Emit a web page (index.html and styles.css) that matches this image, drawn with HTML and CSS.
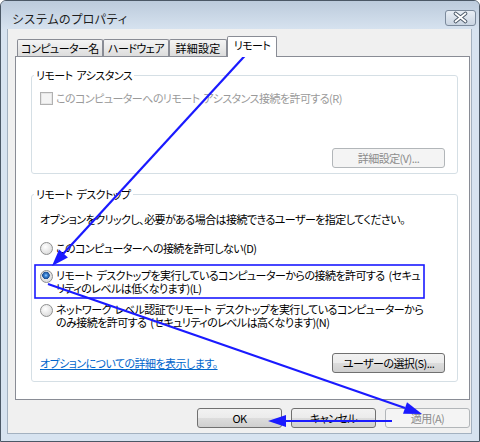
FILE: index.html
```html
<!DOCTYPE html>
<html lang="ja">
<head>
    <meta charset="UTF-8">
    <title>システムのプロパティ</title>
    <link rel="stylesheet" href="styles.css">
</head>
<body>
    <div class="window">
        <div class="titlebar">
            <span class="title">システムのプロパティ</span>
            <span class="close">
                <svg width="29" height="14" viewBox="0 0 29 14">
                    <path d="M9.5 2.5 L19.5 10.5 M19.5 2.5 L9.5 10.5" stroke="#4a5868" stroke-width="3.6" stroke-linecap="round"/>
                    <path d="M9.5 2.5 L19.5 10.5 M19.5 2.5 L9.5 10.5" stroke="#ffffff" stroke-width="1.8" stroke-linecap="round"/>
                </svg>
            </span>
        </div>

        <div class="client">
            <div class="tabs">
                <div class="tab t1">コンピューター名</div>
                <div class="tab t2">ハードウェア</div>
                <div class="tab t3">詳細設定</div>
                <div class="tab active">リモート</div>
            </div>

            <div class="panel">
                <fieldset class="group g1">
                    <legend>リモート アシスタンス</legend>
                    <div class="check off">
                        <span class="box"></span>
                        <span>このコンピューターへのリモート アシスタンス接続を許可する(R)</span>
                    </div>
                    <div class="row">
                        <button class="btn wide off">詳細設定(V)...</button>
                    </div>
                </fieldset>

                <fieldset class="group g2">
                    <legend>リモート デスクトップ</legend>
                    <p class="desc">オプションをクリックし、必要がある場合は接続できるユーザーを指定してください。</p>
                    <div class="radio r1">
                        <span class="dot"></span>
                        <span>このコンピューターへの接続を許可しない(D)</span>
                    </div>
                    <div class="radio r2">
                        <span class="dot on"></span>
                        <span>リモート デスクトップを実行しているコンピューターからの接続を許可する (セキュ<br>リティのレベルは低くなります)(L)</span>
                    </div>
                    <div class="radio r3">
                        <span class="dot"></span>
                        <span>ネットワーク レベル認証でリモート デスクトップを実行しているコンピューターから<br>のみ接続を許可する (セキュリティのレベルは高くなります)(N)</span>
                    </div>
                    <div class="foot">
                        <a class="link" href="#">オプションについての詳細を表示します。</a>
                        <button class="btn wide">ユーザーの選択(S)...</button>
                    </div>
                </fieldset>
            </div>

            <div class="actions">
                <button class="btn">OK</button>
                <button class="btn">キャンセル</button>
                <button class="btn off">適用(A)</button>
            </div>
        </div>

        <svg class="marks" width="480" height="442" viewBox="0 0 480 442">
            <rect x="35" y="265" width="389" height="33" fill="none" stroke="#1a1aff" stroke-width="1.6"/>
            <line x1="252" y1="48" x2="63" y2="254" stroke="#1a1aff" stroke-width="2.2"/>
            <polygon points="52,266 67.9,257.5 59.1,249.5" fill="#1a1aff"/>
            <line x1="48" y1="284" x2="405" y2="408" stroke="#1a1aff" stroke-width="2.2"/>
            <polygon points="422,414 403,413.7 407,402.3" fill="#1a1aff"/>
            <line x1="392" y1="421" x2="285" y2="421" stroke="#1a1aff" stroke-width="2.2"/>
            <polygon points="268,421 286,415 286,427" fill="#1a1aff"/>
        </svg>
    </div>
</body>
</html>
```

FILE: styles.css
```css
* {
    box-sizing: border-box;
    margin: 0;
    padding: 0;
}

body {
    font-family: "Noto Sans CJK JP", "Noto Sans", sans-serif;
    font-size: 11px;
    line-height: 13px;
    letter-spacing: -0.55px;
    word-spacing: 2px;
    font-feature-settings: "palt";
    color: #000;
    background: #fff;
}

.window {
    position: relative;
    width: 480px;
    height: 442px;
    border: 1px solid #4b5866;
    border-radius: 6px 6px 0 0;
    background: #d7e3f0;
    padding: 0 7px 7px 6px;
    overflow: hidden;
}

.titlebar {
    height: 28px;
    margin: 0 -7px 0 -6px;
    padding: 6px 3px 0 11px;
    display: flex;
    align-items: center;
    justify-content: space-between;
    background: linear-gradient(#bccbdc, #d6e2ef);
}

.title {
    font-size: 12px;
    letter-spacing: -0.2px;
    font-feature-settings: normal;
    color: #1e1e1e;
}

.close {
    width: 31px;
    height: 16px;
    border: 1px solid #7b8a9c;
    border-radius: 3px;
    background: linear-gradient(#e8eef5, #cad5e2);
    display: flex;
    align-items: center;
    justify-content: center;
}

.client {
    height: 405px;
    background: #f0f0f0;
    border: 1px solid #a3b1c0;
    border-top: none;
    padding: 7px 1px 0 7px;
}

/* tabs */
.tabs {
    display: flex;
    align-items: flex-end;
    padding-left: 2px;
}

.tab {
    height: 17px;
    border: 1px solid #898c95;
    border-bottom: none;
    border-radius: 2px 2px 0 0;
    background: linear-gradient(#f4f4f4, #e9e9e9 50%, #dcdcdc);
    text-align: center;
    line-height: 16px;
    white-space: nowrap;
}

.t1 { width: 86px; }
.t2 { width: 66px; }
.t3 { width: 58px; letter-spacing: 0.3px; }

.tab.active {
    width: 50px;
    height: 21px;
    margin-bottom: -1px;
    padding-top: 2px;
    line-height: 13px;
    background: #fff;
    position: relative;
    z-index: 1;
}

.panel {
    height: 344px;
    border: 1px solid #898c95;
    background: #fff;
    padding: 0 11px 0 15px;
}

/* group boxes */
.group {
    min-width: 0;
    border: 1px solid #d5dfe5;
    border-radius: 3px;
    padding: 0 12px 5px 8px;
    margin-top: 12px;
}

.group legend {
    margin-left: -6px;
    padding: 0 2px;
    line-height: 13px;
}

.g2 {
    margin-top: 14px;
    padding-bottom: 8px;
}

.check {
    display: flex;
    align-items: center;
    gap: 3px;
    margin-top: 10px;
}

.check.off { color: #9a9a9a; }

.box {
    width: 13px;
    height: 13px;
    border: 1px solid #b1b1b1;
    background: #f4f4f4;
    box-shadow: inset 0 0 0 1px #e6e6e6;
}

.row {
    display: flex;
    justify-content: flex-end;
    margin-top: 43px;
}

.desc { margin-top: 12px; }

.radio {
    display: flex;
    align-items: flex-start;
    gap: 3px;
    white-space: nowrap;
}

.r1 { margin-top: 16px; align-items: center; }
.r2 { margin-top: 14px; }
.r3 { margin-top: 8px; }

.r2 .dot,
.r3 .dot { margin-top: 1px; }

.dot {
    flex: none;
    width: 13px;
    height: 13px;
    border: 1px solid #8e8f8f;
    border-radius: 50%;
    background: radial-gradient(circle at 40% 35%, #ffffff, #e6e6e6 55%, #cfcfcf);
}

.dot.on {
    background: radial-gradient(circle at 45% 40%, #9fd0ff 0, #3b85d6 1.5px, #1d4f92 3.5px, #e6e6e6 4px, #d4d4d4);
}

.foot {
    display: flex;
    justify-content: space-between;
    align-items: center;
    margin-top: 24px;
}

.link {
    color: #0066cc;
    text-decoration: underline;
}

/* buttons */
.btn {
    height: 20px;
    border: 1px solid #707070;
    border-radius: 3px;
    background: linear-gradient(#f2f2f2, #ebebeb 50%, #dddddd 50%, #cfcfcf);
    font: inherit;
    font-feature-settings: inherit;
    letter-spacing: inherit;
    line-height: 18px;
    color: #000;
    white-space: nowrap;
}

.btn.wide { width: 113px; }

.btn.off {
    border-color: #b2b6b9;
    background: #f4f4f4;
    color: #8c8c8c;
}

.actions {
    display: flex;
    justify-content: flex-end;
    gap: 9px;
    margin-top: 8px;
}

.actions .btn { width: 85px; }

/* annotation overlay */
.marks {
    position: absolute;
    top: -1px;
    left: -1px;
    pointer-events: none;
}
```
